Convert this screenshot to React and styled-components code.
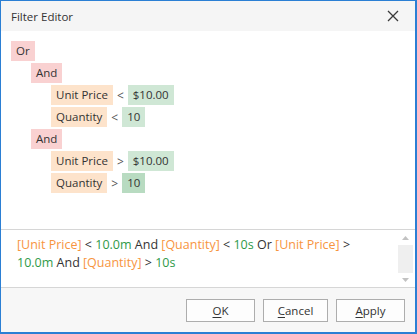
import React from 'react';
import styled, { createGlobalStyle } from 'styled-components';

const GlobalStyle = createGlobalStyle`
  html, body {
    margin: 0;
    padding: 0;
    background: #ffffff;
  }
  * {
    box-sizing: border-box;
  }
`;

const Window = styled.div`
  width: 417px;
  height: 334px;
  border: 1px solid #2b7fd4;
  border-bottom-width: 2px;
  border-right-width: 2px;
  display: flex;
  flex-direction: column;
  font-family: 'Open Sans', 'Noto Sans', sans-serif;
  color: #333333;
  background: #ffffff;
`;

const TitleBar = styled.div`
  height: 30px;
  flex: none;
  display: flex;
  align-items: center;
  justify-content: space-between;
  padding: 0 16px 0 10px;
  background: #f5f5f5;
  font-size: 11.5px;
  color: #333333;
`;

const CloseButton = styled.button`
  width: 12px;
  height: 12px;
  padding: 0;
  border: none;
  background: transparent;
  display: flex;
  cursor: pointer;
`;

const Tree = styled.div`
  height: 198px;
  flex: none;
  display: flex;
  flex-direction: column;
  gap: 2px;
  padding: 10px 0 0 10px;
  background: #ffffff;
`;

const Row = styled.div`
  display: flex;
  align-items: center;
  height: 20px;
  flex: none;
  padding-left: ${(p) => p.$level * 20}px;
`;

const chipColors = {
  group: '#f9d1d1',
  field: '#fde3cb',
  value: '#cfe7d5',
  active: '#b8dbc1',
};

const Chip = styled.span`
  display: inline-block;
  height: 20px;
  line-height: 20px;
  padding: 0 5px;
  font-size: 11.5px;
  color: #333333;
  background: ${(p) => chipColors[p.$kind]};
`;

const Operator = styled.span`
  font-size: 12px;
  color: #555555;
  padding: 0 4px 0 4px;
`;

const Divider = styled.div`
  height: 1px;
  flex: none;
  background: #d6d6d6;
`;

const TextPanel = styled.div`
  height: 57px;
  flex: none;
  display: flex;
  background: #ffffff;
`;

const Expression = styled.div`
  flex: 1;
  padding: 6px 10px 0 16px;
  font-size: 12.5px;
  line-height: 18px;
  color: #333333;
`;

const Field = styled.span`
  color: #f7953f;
`;

const Value = styled.span`
  color: #2f9a48;
`;

const ScrollBar = styled.div`
  width: 15px;
  flex: none;
  margin: 1px 2px 0 0;
  display: flex;
  flex-direction: column;
  background: #efefef;
`;

const ScrollArrow = styled.div`
  height: 14px;
  flex: none;
  display: flex;
  align-items: center;
  justify-content: center;
  background: #ffffff;
  margin-top: ${(p) => (p.$down ? 'auto' : '0')};
`;

const Footer = styled.div`
  flex: 1;
  display: flex;
  justify-content: flex-end;
  align-items: flex-start;
  gap: 8px;
  padding: 11px 10px 0 0;
  background: #f7f7f7;
`;

const Button = styled.button`
  width: ${(p) => p.$w}px;
  height: 23px;
  padding: 0;
  border: 1px solid #adadad;
  background: #fdfdfd;
  font-family: 'Open Sans', 'Noto Sans', sans-serif;
  font-size: 11.5px;
  color: #333333;
  cursor: pointer;

  u {
    text-decoration: underline;
    text-underline-offset: 2px;
  }
`;

function Arrow({ down }) {
  return (
    <svg width="7" height="4" viewBox="0 0 7 4">
      <path d={down ? 'M0 0 L7 0 L3.5 4 Z' : 'M0 4 L7 4 L3.5 0 Z'} fill="#c2c2c2" />
    </svg>
  );
}

export default function App() {
  return (
    <>
      <GlobalStyle />
      <Window>
        <TitleBar>
          <span>Filter Editor</span>
          <CloseButton aria-label="Close">
            <svg width="12" height="12" viewBox="0 0 12 12">
              <path d="M1 1 L11 11 M11 1 L1 11" stroke="#3a3a3a" strokeWidth="1.3" />
            </svg>
          </CloseButton>
        </TitleBar>

        <Tree>
          <Row $level={0}>
            <Chip $kind="group">Or</Chip>
          </Row>
          <Row $level={1}>
            <Chip $kind="group">And</Chip>
          </Row>
          <Row $level={2}>
            <Chip $kind="field">Unit Price</Chip>
            <Operator>&lt;</Operator>
            <Chip $kind="value">$10.00</Chip>
          </Row>
          <Row $level={2}>
            <Chip $kind="field">Quantity</Chip>
            <Operator>&lt;</Operator>
            <Chip $kind="value">10</Chip>
          </Row>
          <Row $level={1}>
            <Chip $kind="group">And</Chip>
          </Row>
          <Row $level={2}>
            <Chip $kind="field">Unit Price</Chip>
            <Operator>&gt;</Operator>
            <Chip $kind="value">$10.00</Chip>
          </Row>
          <Row $level={2}>
            <Chip $kind="field">Quantity</Chip>
            <Operator>&gt;</Operator>
            <Chip $kind="active">10</Chip>
          </Row>
        </Tree>

        <Divider />

        <TextPanel>
          <Expression>
            <Field>[Unit Price]</Field> &lt; <Value>10.0m</Value> And <Field>[Quantity]</Field> &lt;{' '}
            <Value>10s</Value> Or <Field>[Unit Price]</Field> &gt; <Value>10.0m</Value> And{' '}
            <Field>[Quantity]</Field> &gt; <Value>10s</Value>
          </Expression>
          <ScrollBar>
            <ScrollArrow>
              <Arrow />
            </ScrollArrow>
            <ScrollArrow $down>
              <Arrow down />
            </ScrollArrow>
          </ScrollBar>
        </TextPanel>

        <Divider />

        <Footer>
          <Button $w={69}>
            <u>O</u>K
          </Button>
          <Button $w={65}>
            <u>C</u>ancel
          </Button>
          <Button $w={69}>
            <u>A</u>pply
          </Button>
        </Footer>
      </Window>
    </>
  );
}
